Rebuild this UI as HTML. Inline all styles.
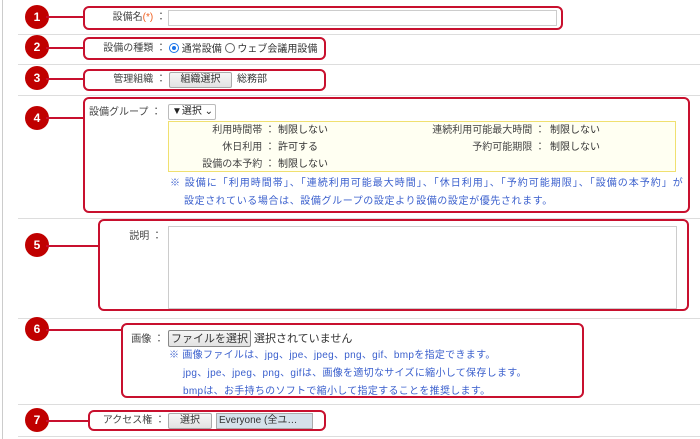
<!DOCTYPE html>
<html><head><meta charset="utf-8"><style>
*{box-sizing:border-box;margin:0;padding:0}
body{width:700px;height:439px;background:#fff;position:relative;overflow:hidden;font-family:"Liberation Sans","Noto Sans CJK JP",sans-serif;font-size:10px;line-height:12px;color:#333}
.a{position:absolute;white-space:nowrap}
.sep{position:absolute;left:18px;right:0;height:1px;background:#ddd}
.box{position:absolute;border:2px solid #c8102e;border-radius:6px}
.c{position:absolute;width:24px;height:24px;border-radius:50%;background:#c00000;color:#fff;font-weight:bold;font-size:12px;text-align:center;line-height:24px}
.ln{position:absolute;height:2px;background:#c8102e}
.lbl{position:absolute;text-align:right;white-space:nowrap;color:#444}
.btn{position:absolute;border:1px solid #aaa;background:linear-gradient(#f6f6f6,#e2e2e2);border-radius:2px;display:flex;align-items:center;justify-content:center;font-size:10px;line-height:10px;color:#333}
.blue{color:#3a5fcd}
</style></head><body>
<div style="position:absolute;left:2px;top:0;width:1px;height:439px;background:#ccc"></div>
<div class="sep" style="top:34px"></div>
<div class="sep" style="top:64px"></div>
<div class="sep" style="top:95px"></div>
<div class="sep" style="top:218px"></div>
<div class="sep" style="top:318px"></div>
<div class="sep" style="top:404px"></div>
<div class="sep" style="top:436px"></div>

<div class="c" style="left:25px;top:5px">1</div><div class="ln" style="left:46px;top:16px;width:38px"></div>
<div class="box" style="left:83px;top:6px;width:480px;height:24px"></div>
<div class="lbl" style="left:90px;top:12px;width:76px">設備名<span style="color:#f06020">(*)</span> ：</div>
<div class="a" style="left:168px;top:10px;width:389px;height:16px;border:1px solid #ccc"></div>

<div class="c" style="left:25px;top:35px">2</div><div class="ln" style="left:46px;top:47px;width:38px"></div>
<div class="box" style="left:83px;top:37px;width:243px;height:23px"></div>
<div class="lbl" style="left:90px;top:43px;width:76px">設備の種類 ：</div>
<div class="a" style="left:169px;top:43px;color:#333"><span style="display:inline-block;width:10px;height:10px;border-radius:50%;border:1px solid #1a73e8;vertical-align:-1px;position:relative"><span style="position:absolute;left:2px;top:2px;width:4px;height:4px;border-radius:50%;background:#1a73e8"></span></span> 通常設備 <span style="display:inline-block;width:10px;height:10px;border-radius:50%;border:1px solid #666;vertical-align:-1px"></span> ウェブ会議用設備</div>

<div class="c" style="left:25px;top:66px">3</div><div class="ln" style="left:46px;top:78px;width:38px"></div>
<div class="box" style="left:83px;top:69px;width:243px;height:22px"></div>
<div class="lbl" style="left:90px;top:74px;width:76px">管理組織 ：</div>
<div class="btn" style="left:169px;top:72px;width:63px;height:16px">組織選択</div>
<div class="a" style="left:237px;top:74px">総務部</div>

<div class="c" style="left:25px;top:106px">4</div><div class="ln" style="left:46px;top:117px;width:38px"></div>
<div class="box" style="left:83px;top:97px;width:607px;height:116px"></div>
<div class="a" style="left:89px;top:107px;color:#444">設備グループ ：</div>
<div class="a" style="left:168px;top:104px;width:48px;height:16px;border:1px solid #bbb;border-radius:2px;padding-left:3px;line-height:14px;color:#222">▼選択 ⌄</div>
<div class="a" style="left:168px;top:121px;width:508px;height:51px;border:1px solid #f0e070;background:#fffff2"></div>
<div class="lbl" style="left:180px;top:125px;width:95px">利用時間帯 ：</div><div class="a" style="left:278px;top:125px">制限しない</div>
<div class="lbl" style="left:400px;top:125px;width:145px">連続利用可能最大時間 ：</div><div class="a" style="left:550px;top:125px">制限しない</div>
<div class="lbl" style="left:180px;top:142px;width:95px">休日利用 ：</div><div class="a" style="left:278px;top:142px">許可する</div>
<div class="lbl" style="left:400px;top:142px;width:145px">予約可能期限 ：</div><div class="a" style="left:550px;top:142px">制限しない</div>
<div class="lbl" style="left:180px;top:159px;width:95px">設備の本予約 ：</div><div class="a" style="left:278px;top:159px">制限しない</div>
<div class="a blue" style="left:170px;top:178px;letter-spacing:1px">※ 設備に「利用時間帯」、「連続利用可能最大時間」、「休日利用」、「予約可能期限」、「設備の本予約」が</div>
<div class="a blue" style="left:184px;top:196px;letter-spacing:0.6px">設定されている場合は、設備グループの設定より設備の設定が優先されます。</div>

<div class="c" style="left:25px;top:233px">5</div><div class="ln" style="left:46px;top:245px;width:53px"></div>
<div class="box" style="left:98px;top:219px;width:591px;height:92px"></div>
<div class="lbl" style="left:100px;top:231px;width:62px">説明 ：</div>
<div class="a" style="left:168px;top:226px;width:509px;height:83px;border:1px solid #ccc"></div>

<div class="c" style="left:25px;top:317px">6</div><div class="ln" style="left:46px;top:329px;width:76px"></div>
<div class="box" style="left:121px;top:323px;width:463px;height:75px"></div>
<div class="lbl" style="left:120px;top:334px;width:44px">画像 ：</div>
<div class="btn" style="left:168px;top:330px;width:83px;height:17px;font-size:11px;border-color:#888">ファイルを選択</div>
<div class="a" style="left:254px;top:333px;font-size:11px">選択されていません</div>
<div class="a blue" style="left:169px;top:350px;letter-spacing:0.3px">※ 画像ファイルは、jpg、jpe、jpeg、png、gif、bmpを指定できます。</div>
<div class="a blue" style="left:183px;top:368px;letter-spacing:0.3px">jpg、jpe、jpeg、png、gifは、画像を適切なサイズに縮小して保存します。</div>
<div class="a blue" style="left:183px;top:386px;letter-spacing:0.3px">bmpは、お手持ちのソフトで縮小して指定することを推奨します。</div>

<div class="c" style="left:25px;top:408px">7</div><div class="ln" style="left:46px;top:420px;width:43px"></div>
<div class="box" style="left:88px;top:410px;width:238px;height:21px"></div>
<div class="lbl" style="left:95px;top:415px;width:70px">アクセス権 ：</div>
<div class="btn" style="left:168px;top:413px;width:44px;height:16px">選択</div>
<div class="a" style="left:216px;top:413px;width:97px;height:16px;border:1px solid #aaa;background:#d5e1ea;padding-left:2px;line-height:14px;font-size:10px">Everyone (全ユ…</div>
</body></html>
